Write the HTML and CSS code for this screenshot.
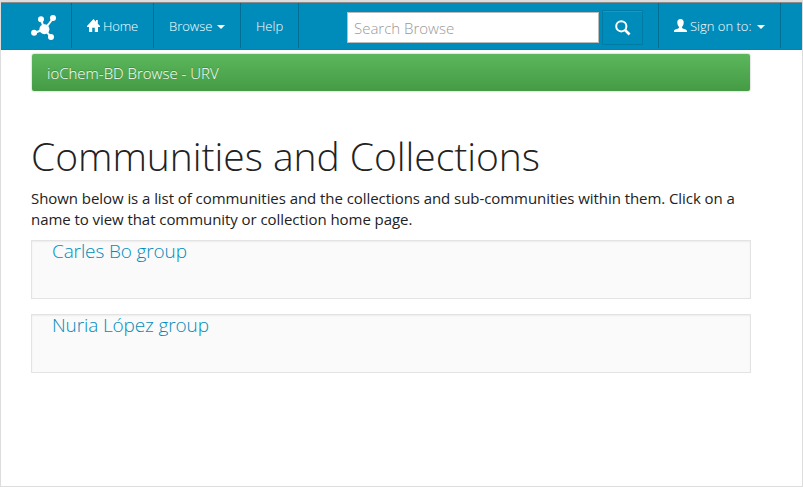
FILE: index.html
```html
<!DOCTYPE html>
<html lang="en">
<head>
<meta charset="utf-8">
<title>ioChem-BD Browse</title>
<link rel="stylesheet" href="styles.css">
</head>
<body>
<div class="window">
  <nav class="navbar">
    <a class="brand" href="#">
      <svg width="26" height="26" viewBox="0 0 26 26" fill="#fff" stroke="#fff">
        <path d="M13.500 14.300 10 4.500M13.500 14.300 22 3.500M13.500 14.300 3 18M13.500 14.300 20 22" stroke-width="2" fill="none"/>
        <g stroke="none">
          <circle cx="13.400" cy="14.300" r="5"/>
          <circle cx="10" cy="4.200" r="3"/>
          <circle cx="22" cy="3" r="3"/>
          <circle cx="3.100" cy="17.800" r="3"/>
          <circle cx="20" cy="22" r="3"/>
        </g>
      </svg>
    </a>
    <a class="nav-item home" href="#">
      <svg class="icon" width="13" height="13" viewBox="0 0 13 14" preserveAspectRatio="none" fill="#fff"><path d="M6.500 0 0 7.500v1h2V14h3.200V9.500h2.600V14H11V8.500h2v-1L10.800 5V1.200H9V3z"/></svg>
      <span>Home</span>
    </a>
    <a class="nav-item browse" href="#"><span>Browse</span><i class="caret"></i></a>
    <a class="nav-item help" href="#"><span>Help</span></a>
    <form class="search">
      <input type="text" placeholder="Search Browse">
      <button type="button" aria-label="Search">
        <svg width="16" height="16" viewBox="0 0 16 16" fill="none" stroke="#fff"><circle cx="6.300" cy="6.300" r="5.100" stroke-width="2"/><path d="M10 10l4.600 4.500" stroke-width="2.600"/></svg>
      </button>
    </form>
    <a class="nav-item sign" href="#">
      <svg class="icon" width="13" height="13" viewBox="0 0 13 13.500" preserveAspectRatio="none" fill="#fff"><path d="M6.500 0C4.300 0 3.200 1.500 3.300 3.700 3.300 5.800 4 7.300 5 8.200V9.300C3.800 10.300 0 10.600 0 12.500V13.500H13V12.500C13 10.600 9.200 10.300 8 9.300V8.200C9 7.300 9.700 5.800 9.700 3.700 9.800 1.500 8.700 0 6.500 0z"/></svg>
      <span>Sign on to:</span><i class="caret"></i>
    </a>
  </nav>
  <main class="content">
    <div class="breadcrumb">ioChem-BD Browse - URV</div>
    <h1>Communities and Collections</h1>
    <p>Shown below is a list of communities and the collections and sub-communities within them. Click on a name to view that community or collection home page.</p>
    <section class="well"><a href="#">Carles Bo group</a></section>
    <section class="well"><a href="#">Nuria López group</a></section>
  </main>
</div>
</body>
</html>
```
FILE: styles.css
```css
* { box-sizing: border-box; }
body {
  margin: 0;
  background: #fff;
  color: #222;
  font-family: "Open Sans", sans-serif;
  font-size: 15px;
  line-height: 21px;
}
a { text-decoration: none; color: #008cba; }
.window {
  height: 487px;
  border: 1px solid #ddd;
  border-top: 2px solid #ddd;
}
.navbar {
  display: flex;
  height: 48px;
  background: #008cba;
  border-top: 1px solid #8b8b8b;
  border-bottom: 1px solid #0086b2;
}
.brand {
  width: 71px;
  height: 45px;
  padding: 12px 0 0 30px;
  border-right: 1px solid #006e92;
}
.brand svg { display: block; }
.nav-item {
  display: flex;
  align-items: center;
  height: 45px;
  padding: 2px 0 0 15px;
  border-right: 1px solid #006e92;
  color: #fff;
  font-size: 13px;
  font-weight: 300;
  white-space: nowrap;
}
.home { width: 82px; letter-spacing: -.15px; }
.browse { width: 87px; }
.help { width: 58px; }
.sign { width: 122px; }
.icon { margin: 0 3px 2px 0; }
.caret {
  margin-left: 5px;
  border: 4px solid transparent;
  border-top-color: #fff;
  border-bottom: 0;
}
.search {
  display: flex;
  width: 360px;
  height: 45px;
  padding-left: 48px;
  border-right: 1px solid #006e92;
}
.search input {
  width: 252px;
  height: 31px;
  margin: 9px 3px 0 0;
  padding: 0 6px;
  border: 1px solid #bbb;
  border-radius: 0;
  background: #fff;
  font: 300 15px "Open Sans", sans-serif;
}
.search input::placeholder { color: #999; opacity: 1; }
.search button {
  width: 41px;
  height: 35px;
  margin-top: 7px;
  padding: 0;
  border: 1px solid #007ba3;
  background: #008cba;
  box-shadow: inset 0 1px 0 #1a98c1;
}
.search button svg { display: block; margin: auto; }
.content { width: 750px; padding: 4px 0 0 30px; }
.breadcrumb {
  height: 37px;
  margin-left: 1px;
  width: 718px;
  padding-left: 15px;
  border-radius: 2px;
  background: linear-gradient(#5cb75c, #449b44);
  box-shadow: 0 0 2px rgba(0, 0, 0, .35);
  color: #fff;
  font-weight: 300;
  line-height: 39px;
  text-shadow: 0 -1px 0 rgba(0, 0, 0, .2);
}
h1 {
  margin: 43px 0 10px;
  font-size: 39px;
  font-weight: 300;
  letter-spacing: -.04px;
  line-height: 44px;
}
p { margin: 0 0 10px; letter-spacing: -.06px; }
.well {
  height: 59px;
  margin-bottom: 15px;
  padding: 0 20px;
  border: 1px solid #e3e3e3;
  background: #fafafa;
  box-shadow: inset 0 1px 2px rgba(0, 0, 0, .06);
  font-size: 19px;
  font-weight: 300;
  letter-spacing: -.12px;
  line-height: 21px;
}
```
